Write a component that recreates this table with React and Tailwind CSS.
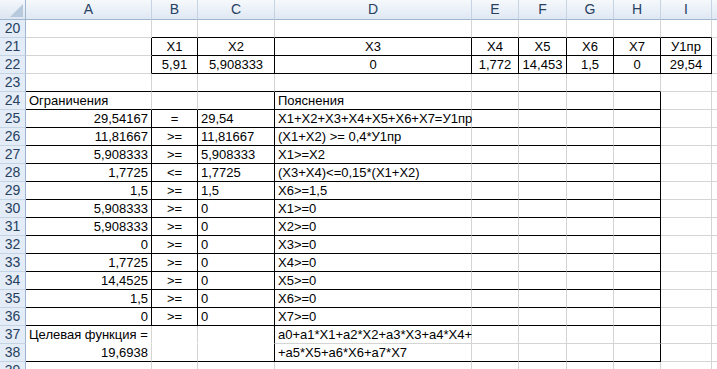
import React from "react";

const COLS = ["A", "B", "C", "D", "E", "F", "G", "H", "I", "J"];
const ROWS = [];
for (let r = 20; r <= 39; r++) ROWS.push(r);

const cells = {
  B21: ["X1", "c"], C21: ["X2", "c"], D21: ["X3", "c"], E21: ["X4", "c"], F21: ["X5", "c"], G21: ["X6", "c"], H21: ["X7", "c"], I21: ["У1пр", "c"],
  B22: ["5,91", "c"], C22: ["5,908333", "c"], D22: ["0", "c"], E22: ["1,772", "c"], F22: ["14,453", "c"], G22: ["1,5", "c"], H22: ["0", "c"], I22: ["29,54", "c"],
  A24: ["Ограничения", "l"], D24: ["Пояснения", "l"],
  A37: ["Целевая функция =", "l"], A38: ["19,6938", "r"],
  D37: ["a0+a1*X1+a2*X2+a3*X3+a4*X4+", "l"], D38: ["+a5*X5+a6*X6+a7*X7", "l"],
};

const rowsData = [
  ["29,54167", "=", "29,54", "X1+X2+X3+X4+X5+X6+X7=У1пр"],
  ["11,81667", ">=", "11,81667", "(X1+X2) >= 0,4*У1пр"],
  ["5,908333", ">=", "5,908333", "X1>=X2"],
  ["1,7725", "<=", "1,7725", "(X3+X4)<=0,15*(X1+X2)"],
  ["1,5", ">=", "1,5", "X6>=1,5"],
  ["5,908333", ">=", "0", "X1>=0"],
  ["5,908333", ">=", "0", "X2>=0"],
  ["0", ">=", "0", "X3>=0"],
  ["1,7725", ">=", "0", "X4>=0"],
  ["14,4525", ">=", "0", "X5>=0"],
  ["1,5", ">=", "0", "X6>=0"],
  ["0", ">=", "0", "X7>=0"],
];
rowsData.forEach((d, i) => {
  const r = 25 + i;
  cells["A" + r] = [d[0], "r"];
  cells["B" + r] = [d[1], "c"];
  cells["C" + r] = [d[2], "l"];
  cells["D" + r] = [d[3], "l"];
});

const ci = (c) => COLS.indexOf(c);

function rightStyle(c, r) {
  const i = ci(c);
  if ((r === 21 || r === 22) && i <= ci("I")) return "black";
  if (r === 24 && (c === "C" || c === "H")) return "black";
  if (r >= 25 && r <= 36 && ["A", "B", "C", "H"].includes(c)) return "black";
  if ((r === 37 || r === 38) && (c === "C" || c === "H")) return "black";
  return "grid";
}

function bottomStyle(c, r) {
  const i = ci(c);
  if ((r === 20 || r === 21 || r === 22) && i >= ci("B") && i <= ci("I")) return "black";
  if (r >= 23 && r <= 36 && i <= ci("H")) return "black";
  if (r === 38 && i <= ci("H")) return "black";
  if (r === 37 && i <= ci("C")) return "none";
  return "grid";
}

const rClass = {
  black: "border-r border-r-black",
  grid: "border-r border-r-[#d4d4d4]",
};
const bClass = {
  black: "border-b border-b-black",
  grid: "border-b border-b-[#d4d4d4]",
  none: "border-b border-b-white",
};
const alignClass = {
  l: "justify-start",
  r: "justify-end",
  c: "justify-center",
};

export default function App() {
  return (
    <div
      className="w-[717px] h-[369px] overflow-hidden bg-white text-black"
      style={{ fontFamily: '"Liberation Sans", Arial, sans-serif' }}
    >
      <div className="grid grid-cols-[26px_126px_46px_77px_197px_47px_48px_47px_47px_51px_80px] grid-rows-[20px_repeat(20,18px)] text-[13px]">
        {/* corner */}
        <div className="relative border-r border-b border-r-[#9eb6ce] border-b-[#9eb6ce] bg-gradient-to-b from-[#f4f7fb] to-[#dce5f1]">
          <svg className="absolute right-[2px] bottom-[2px]" width="13" height="13" viewBox="0 0 13 13">
            <polygon points="13,0 13,13 0,13" fill="#b7c9dd" />
          </svg>
        </div>
        {COLS.map((c) => (
          <div
            key={c}
            className="flex items-center justify-center border-r border-b border-r-[#c5d3e3] border-b-[#9eb6ce] bg-gradient-to-b from-[#f6f9fc] to-[#dfe8f3] text-[#27415f] text-[14px]"
          >
            {c}
          </div>
        ))}
        {ROWS.map((r) => (
          <React.Fragment key={r}>
            <div className="flex items-center justify-center overflow-hidden border-r border-b border-r-[#9eb6ce] border-b-[#c5d3e3] bg-[#e4ecf7] text-[#27415f] text-[14px]">
              {r}
            </div>
            {COLS.map((c) => {
              const key = c + r;
              const cell = cells[key];
              return (
                <div
                  key={key}
                  className={`flex items-center px-[3px] pt-[1px] whitespace-nowrap overflow-visible ${rClass[rightStyle(c, r)]} ${bClass[bottomStyle(c, r)]} ${cell ? alignClass[cell[1]] : ""}`}
                >
                  {cell ? cell[0] : null}
                </div>
              );
            })}
          </React.Fragment>
        ))}
      </div>
    </div>
  );
}
